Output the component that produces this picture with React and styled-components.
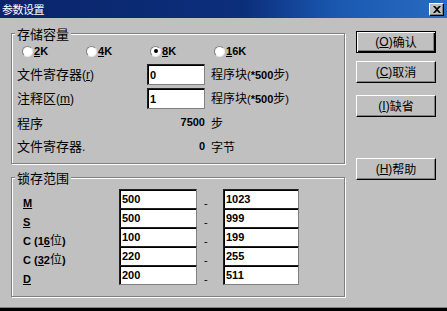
import React from 'react';
import styled, { createGlobalStyle } from 'styled-components';

const CJK = '"Noto Sans CJK SC", sans-serif';
const LAT = '"Liberation Sans", "Noto Sans CJK SC", sans-serif';

const GlobalStyle = createGlobalStyle`
  html, body { margin: 0; padding: 0; }
  body { background: #c0c0c0; font-family: ${LAT}; color: #000; }
`;

const Window = styled.div`
  width: 447px;
  height: 311px;
  box-sizing: border-box;
  display: flex;
  flex-direction: column;
  background: #c0c0c0;
  border-bottom: 3px solid #000;
  box-shadow: inset 0 -1px 0 #808080;
  overflow: hidden;
`;

const TitleBar = styled.div`
  height: 18px;
  flex: none;
  display: flex;
  align-items: center;
  justify-content: space-between;
  padding: 0 3px 0 2px;
  background: linear-gradient(90deg, #0a246a 0%, #0c2f7c 55%, #1a58b0 75%, #2a6cc2 100%);
`;

const Title = styled.span`
  color: #fff;
  font: 11px/1 ${CJK};
  letter-spacing: -0.5px;
`;

const CloseBtn = styled.span`
  width: 15px;
  height: 13px;
  box-sizing: border-box;
  background: #c0c0c0;
  border: 1px solid;
  border-color: #fff #000 #000 #fff;
  box-shadow: inset -1px -1px 0 #808080;
  display: flex;
  align-items: center;
  justify-content: center;
`;

const Body = styled.div`
  flex: 1;
  display: flex;
  padding: 8px 0 0 11px;
  gap: 11px;
`;

const LeftCol = styled.div`
  width: 334px;
  display: flex;
  flex-direction: column;
  gap: 6px;
`;

const Group = styled.fieldset`
  margin: 0;
  padding: 4px 0 0;
  min-width: 0;
  box-sizing: border-box;
  width: 334px;
  height: ${(p) => p.$h}px;
  border: 1px solid #808080;
  box-shadow: inset 1px 1px 0 #fff, 1px 1px 0 #fff;
`;

const Legend = styled.legend`
  margin-left: 3px;
  padding: 0 2px;
  font: 13px/15px ${CJK};
  background: #c0c0c0;
`;

const RadioRow = styled.div`
  display: grid;
  grid-template-columns: repeat(4, 64px);
  padding-left: 10px;
  height: 12px;
  align-items: center;
`;

const RadioItem = styled.label`
  display: flex;
  align-items: center;
  gap: 1px;
  font: bold 11px/12px ${LAT};
`;

const RadioCircle = styled.span`
  width: 11px;
  height: 11px;
  box-sizing: border-box;
  border-radius: 50%;
  background: #fff;
  border: 1px solid;
  border-color: #808080 #e8e8e8 #e8e8e8 #808080;
  display: flex;
  align-items: center;
  justify-content: center;
  &::after {
    content: '';
    width: 4px;
    height: 4px;
    border-radius: 50%;
    background: ${(p) => (p.$on ? '#000' : 'transparent')};
  }
`;

const U = styled.span`
  text-decoration: underline;
  text-underline-offset: 1px;
`;

const FieldGrid = styled.div`
  display: grid;
  grid-template-columns: 130px 58px auto;
  grid-auto-rows: 21px;
  row-gap: 3px;
  padding-left: 5px;
  margin-top: 7px;
  align-items: center;
`;

const FieldLabel = styled.span`
  font: 13px/15px ${CJK};
  white-space: nowrap;
`;

const Lat = styled.span`
  font-family: ${LAT};
  font-weight: ${(p) => (p.$bold ? 700 : 400)};
  font-size: ${(p) => p.$size || 12}px;
`;

const TextField = styled.input`
  box-sizing: border-box;
  width: ${(p) => p.$w}px;
  height: ${(p) => p.$h}px;
  margin: 0;
  padding: 0 2px;
  background: #fff;
  border: 1px solid;
  border-color: #202020 #808080 #808080 #202020;
  box-shadow: inset 1px 1px 0 #000;
  font: bold 11px/1 ${LAT};
  color: #000;
  outline: none;
  align-self: start;
`;

const Suffix = styled.span`
  padding-left: 6px;
  font: 12px/15px ${CJK};
  white-space: nowrap;
`;

const Value = styled.span`
  text-align: right;
  font: bold 11px/15px ${LAT};
`;

const RangeGrid = styled.div`
  display: grid;
  grid-template-columns: 96px 78px 26px 76px;
  grid-auto-rows: 19px;
  padding-left: 11px;
`;

const RangeLabel = styled.span`
  align-self: end;
  margin-bottom: -2px;
  font: bold 11px/13px ${LAT};
  white-space: nowrap;
`;

const RangeCjk = styled.span`
  font: 400 12px/13px ${CJK};
`;

const Dash = styled.span`
  align-self: end;
  margin-bottom: -2px;
  padding-left: 7px;
  font: 11px/13px ${LAT};
`;

const ButtonCol = styled.div`
  width: 80px;
  display: flex;
  flex-direction: column;
  padding-top: 5px;
`;

const Button = styled.button`
  width: 80px;
  height: 22px;
  margin: ${(p) => p.$mt}px 0 0;
  padding: 0;
  box-sizing: border-box;
  background: #c0c0c0;
  border: 1px solid;
  border-color: ${(p) => (p.$default ? '#000' : '#fff #000 #000 #fff')};
  box-shadow: ${(p) =>
    p.$default
      ? 'inset 1px 1px 0 #fff, inset -1px -1px 0 #000, inset -2px -2px 0 #808080'
      : 'inset -1px -1px 0 #808080'};
  font: 12px/1 ${CJK};
  color: #000;
  display: flex;
  align-items: center;
  justify-content: center;
`;

const BtnLat = styled.span`
  font: 12px/1 ${LAT};
`;

const radios = [
  { k: '2', on: false },
  { k: '4', on: false },
  { k: '8', on: true },
  { k: '16', on: false },
];

const ranges = [
  { label: <U>M</U>, a: '500', b: '1023' },
  { label: <U>S</U>, a: '500', b: '999' },
  { label: <>C (1<U>6</U><RangeCjk>位</RangeCjk>)</>, a: '100', b: '199' },
  { label: <>C (<U>3</U>2<RangeCjk>位</RangeCjk>)</>, a: '220', b: '255' },
  { label: <U>D</U>, a: '200', b: '511' },
];

function CloseGlyph() {
  return (
    <svg width="8" height="7" viewBox="0 0 8 7">
      <path d="M0 0h2l2 2 2-2h2L5 3.5 8 7H6L4 5 2 7H0l3-3.5z" fill="#000" />
    </svg>
  );
}

function ButtonLabel({ k, text }) {
  return (
    <>
      <BtnLat>(<U>{k}</U>)</BtnLat>
      {text}
    </>
  );
}

export default function App() {
  return (
    <>
      <GlobalStyle />
      <Window>
        <TitleBar>
          <Title>参数设置</Title>
          <CloseBtn>
            <CloseGlyph />
          </CloseBtn>
        </TitleBar>
        <Body>
          <LeftCol>
            <Group $h={138}>
              <Legend>存储容量</Legend>
              <RadioRow>
                {radios.map((r) => (
                  <RadioItem key={r.k}>
                    <RadioCircle $on={r.on} />
                    <span>
                      {r.k.length > 1 ? (
                        <>
                          <U>{r.k[0]}</U>
                          {r.k.slice(1)}K
                        </>
                      ) : (
                        <>
                          <U>{r.k}</U>K
                        </>
                      )}
                    </span>
                  </RadioItem>
                ))}
              </RadioRow>
              <FieldGrid>
                <FieldLabel>
                  文件寄存器<Lat>(<U>r</U>)</Lat>
                </FieldLabel>
                <TextField $w={58} $h={21} readOnly value="0" />
                <Suffix>
                  程序块<Lat $size={11}>(</Lat>
                  <Lat $bold $size={11}>*500</Lat>步<Lat $size={11}>)</Lat>
                </Suffix>
                <FieldLabel>
                  注释区<Lat>(<U>m</U>)</Lat>
                </FieldLabel>
                <TextField $w={58} $h={21} readOnly value="1" />
                <Suffix>
                  程序块<Lat $size={11}>(</Lat>
                  <Lat $bold $size={11}>*500</Lat>步<Lat $size={11}>)</Lat>
                </Suffix>
                <FieldLabel>程序</FieldLabel>
                <Value>7500</Value>
                <Suffix>步</Suffix>
                <FieldLabel>
                  文件寄存器<Lat>.</Lat>
                </FieldLabel>
                <Value>0</Value>
                <Suffix>字节</Suffix>
              </FieldGrid>
            </Group>
            <Group $h={127}>
              <Legend>锁存范围</Legend>
              <RangeGrid>
                {ranges.map((r, i) => (
                  <React.Fragment key={i}>
                    <RangeLabel>{r.label}</RangeLabel>
                    <TextField $w={78} $h={20} readOnly value={r.a} />
                    <Dash>-</Dash>
                    <TextField $w={76} $h={20} readOnly value={r.b} />
                  </React.Fragment>
                ))}
              </RangeGrid>
            </Group>
          </LeftCol>
          <ButtonCol>
            <Button $mt={0} $default>
              <ButtonLabel k="O" text="确认" />
            </Button>
            <Button $mt={8}>
              <ButtonLabel k="C" text="取消" />
            </Button>
            <Button $mt={12}>
              <ButtonLabel k="I" text="缺省" />
            </Button>
            <Button $mt={41}>
              <ButtonLabel k="H" text="帮助" />
            </Button>
          </ButtonCol>
        </Body>
      </Window>
    </>
  );
}
